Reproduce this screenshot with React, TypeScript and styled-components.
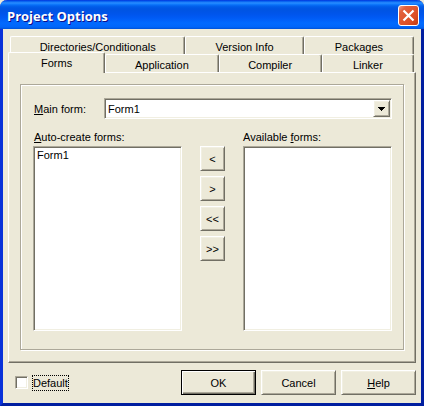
import React, { useState } from "react";
import styled, { createGlobalStyle, css } from "styled-components";

const face = "#ece9d8";
const shade = "#aca899";
const dark = "#716f64";
const light = "#ffffff";
const cream = "#f1efe2";

const GlobalStyle = createGlobalStyle`
  *, *::before, *::after { box-sizing: border-box; }
  body {
    margin: 0;
    background: ${face};
    color: #000;
    font: 11px/14px "Liberation Sans", Arial, sans-serif;
  }
  button, select, input { font: inherit; color: inherit; }
`;

const raised = css`
  border: 1px solid;
  border-color: ${light} ${dark} ${dark} ${light};
  box-shadow: inset 1px 1px ${cream}, inset -1px -1px ${shade};
`;

const sunken = css`
  border: 1px solid;
  border-color: ${shade} ${light} ${light} ${shade};
  box-shadow: inset 1px 1px ${dark}, inset -1px -1px ${cream};
`;

const Window = styled.main`
  display: flex;
  flex-direction: column;
  min-height: 100vh;
  background: ${face};
  border: solid;
  border-width: 0 3px 3px;
  border-color: #0831d9 #001ea0 #001ea0 #0831d9;
  border-radius: 7px 7px 0 0;
`;

const TitleBar = styled.header`
  display: flex;
  align-items: center;
  justify-content: space-between;
  height: 29px;
  margin: 0 -3px;
  padding: 2px 5px 0 7px;
  border-radius: 7px 7px 0 0;
  background: linear-gradient(
    #0831d9 0, #0058ee 1px, #2b8fff 3px, #127dff 4px, #0262ee 6px,
    #0057e5 8px, #0054e3 10px, #0055eb 14px, #005bf5 18px, #026afe 23px,
    #0066fa 27px, #0052d6 29px
  );
`;

const Title = styled.h1`
  margin: 0;
  color: #fff;
  font: bold 13px/20px "Open Sans", "Noto Sans", sans-serif;
  text-shadow: 1px 1px #0f1089;
`;

const CloseButton = styled.button`
  width: 21px;
  height: 21px;
  padding: 0;
  border: 1px solid #fff;
  border-radius: 3px;
  background: linear-gradient(135deg, #f0a08a 0, #e2603c 20%, #dc4f26 70%, #c03a10 100%);
  svg { display: block; }
`;

const Content = styled.div`
  display: flex;
  flex: 1;
  flex-direction: column;
  padding: 7px 5px 8px;
`;

const TabRow = styled.div<{ $columns: string; $inset?: boolean }>`
  display: grid;
  grid-template-columns: ${(p) => p.$columns};
  height: 18px;
  padding: 0 2px 0 ${(p) => (p.$inset ? 2 : 0)}px;
`;

const Tab = styled.button<{ $active?: boolean }>`
  padding: 2px 0 0;
  background: ${face};
  border: solid;
  border-width: 1px 1px 0 1px;
  border-color: ${light} ${dark} ${light} ${light};
  border-radius: 2px 2px 0 0;
  box-shadow: inset -1px 0 ${shade};
  ${(p) =>
    p.$active &&
    css`
      z-index: 1;
      margin: -2px 0 -1px;
      padding: 0 0 1px;
    `}
`;

const Panel = styled.section`
  display: flex;
  flex: 1;
  padding: 11px 11px 12px;
  border: 1px solid;
  border-color: ${light} ${dark} ${dark} ${light};
  box-shadow: inset -1px -1px ${shade};
`;

const Group = styled.div`
  display: flex;
  flex: 1;
  flex-direction: column;
  padding: 13px 11px 18px 12px;
  border: 1px solid ${shade};
  box-shadow: inset 1px 1px ${light}, 1px 1px ${light};
`;

const MainFormRow = styled.div`
  display: grid;
  grid-template-columns: 71px 1fr;
  align-items: center;
`;

const FieldLabel = styled.label`
  padding-left: 1px;
`;

const SelectBox = styled.div`
  display: grid;
  height: 21px;
  padding: 1px;
  background: #fff;
  ${sunken}
  > * { grid-area: 1 / 1; }
`;

const Select = styled.select`
  appearance: none;
  border: 0;
  padding: 0 20px 0 2px;
  background: transparent;
  outline: 0;
`;

const Arrow = styled.span`
  display: grid;
  place-items: center;
  justify-self: end;
  width: 17px;
  background: ${face};
  pointer-events: none;
  ${raised}
`;

const Lists = styled.div`
  display: grid;
  flex: 1;
  grid-template-columns: 1fr 61px 1fr;
  grid-template-rows: 16px 1fr;
  margin-top: 11px;
`;

const AvailableLabel = styled.label`
  grid-column: 3;
  grid-row: 1;
`;

const List = styled.select<{ $column: number }>`
  appearance: none;
  grid-column: ${(p) => p.$column};
  grid-row: 2;
  width: 100%;
  height: 100%;
  padding: 1px;
  background: #fff;
  border-radius: 0;
  outline: 0;
  overflow: hidden;
  ${sunken}
  option { min-height: 13px; padding: 1px 2px 0; }
`;

const MoveButtons = styled.div`
  display: flex;
  grid-column: 2;
  grid-row: 2;
  flex-direction: column;
  align-items: center;
  gap: 5px;
`;

const PushButton = styled.button<{ $width: number; $primary?: boolean }>`
  width: ${(p) => p.$width}px;
  height: 25px;
  padding: 0;
  background: ${face};
  ${raised}
  ${(p) =>
    p.$primary &&
    css`
      border-color: #000;
      box-shadow: inset 1px 1px ${light}, inset -1px -1px ${dark}, inset -2px -2px ${shade};
    `}
`;

const Footer = styled.footer`
  display: flex;
  align-items: center;
  gap: 5px;
  margin-top: 7px;
`;

const DefaultLabel = styled.label`
  display: flex;
  align-items: center;
  gap: 5px;
  margin: 0 auto 0 7px;
  span { outline: 1px dotted #000; }
`;

const Checkbox = styled.input`
  appearance: none;
  width: 13px;
  height: 13px;
  margin: 0;
  background: #fff;
  ${sunken}
  &:checked { background: #fff linear-gradient(#000, #000) center / 5px 5px no-repeat; }
`;

export default function App() {
  const [isDefault, setIsDefault] = useState(false);
  return (
    <>
      <GlobalStyle />
      <Window>
        <TitleBar>
          <Title>Project Options</Title>
          <CloseButton aria-label="Close">
            <svg width="19" height="19" viewBox="0 0 19 19">
              <path d="M4.5 4.5l10 10M14.5 4.5l-10 10" stroke="#fff" strokeWidth="2.2" />
            </svg>
          </CloseButton>
        </TitleBar>
        <Content>
          <div role="tablist">
            <TabRow $columns="175fr 118fr 110fr" $inset>
              <Tab role="tab">Directories/Conditionals</Tab>
              <Tab role="tab">Version Info</Tab>
              <Tab role="tab">Packages</Tab>
            </TabRow>
            <TabRow $columns="97fr 113fr 103fr 92fr">
              <Tab role="tab" $active aria-selected>Forms</Tab>
              <Tab role="tab">Application</Tab>
              <Tab role="tab">Compiler</Tab>
              <Tab role="tab">Linker</Tab>
            </TabRow>
          </div>
          <Panel role="tabpanel">
            <Group>
              <MainFormRow>
                <FieldLabel htmlFor="main-form"><u>M</u>ain form:</FieldLabel>
                <SelectBox>
                  <Select id="main-form"><option>Form1</option></Select>
                  <Arrow>
                    <svg width="7" height="4" viewBox="0 0 7 4" shapeRendering="crispEdges">
                      <path d="M0 0h7v1h-1v1h-1v1h-1v1h-1v-1h-1v-1h-1v-1h-1z" />
                    </svg>
                  </Arrow>
                </SelectBox>
              </MainFormRow>
              <Lists>
                <FieldLabel htmlFor="auto-create"><u>A</u>uto-create forms:</FieldLabel>
                <List $column={1} id="auto-create" size={10}><option>Form1</option></List>
                <MoveButtons>
                  <PushButton $width={25}>&lt;</PushButton>
                  <PushButton $width={25}>&gt;</PushButton>
                  <PushButton $width={25}>&lt;&lt;</PushButton>
                  <PushButton $width={25}>&gt;&gt;</PushButton>
                </MoveButtons>
                <AvailableLabel htmlFor="available">Available <u>f</u>orms:</AvailableLabel>
                <List $column={3} id="available" size={10} />
              </Lists>
            </Group>
          </Panel>
          <Footer>
            <DefaultLabel>
              <Checkbox type="checkbox" checked={isDefault} onChange={(e) => setIsDefault(e.target.checked)} />
              <span>Default</span>
            </DefaultLabel>
            <PushButton $width={75} $primary>OK</PushButton>
            <PushButton $width={75}>Cancel</PushButton>
            <PushButton $width={75}><u>H</u>elp</PushButton>
          </Footer>
        </Content>
      </Window>
    </>
  );
}
